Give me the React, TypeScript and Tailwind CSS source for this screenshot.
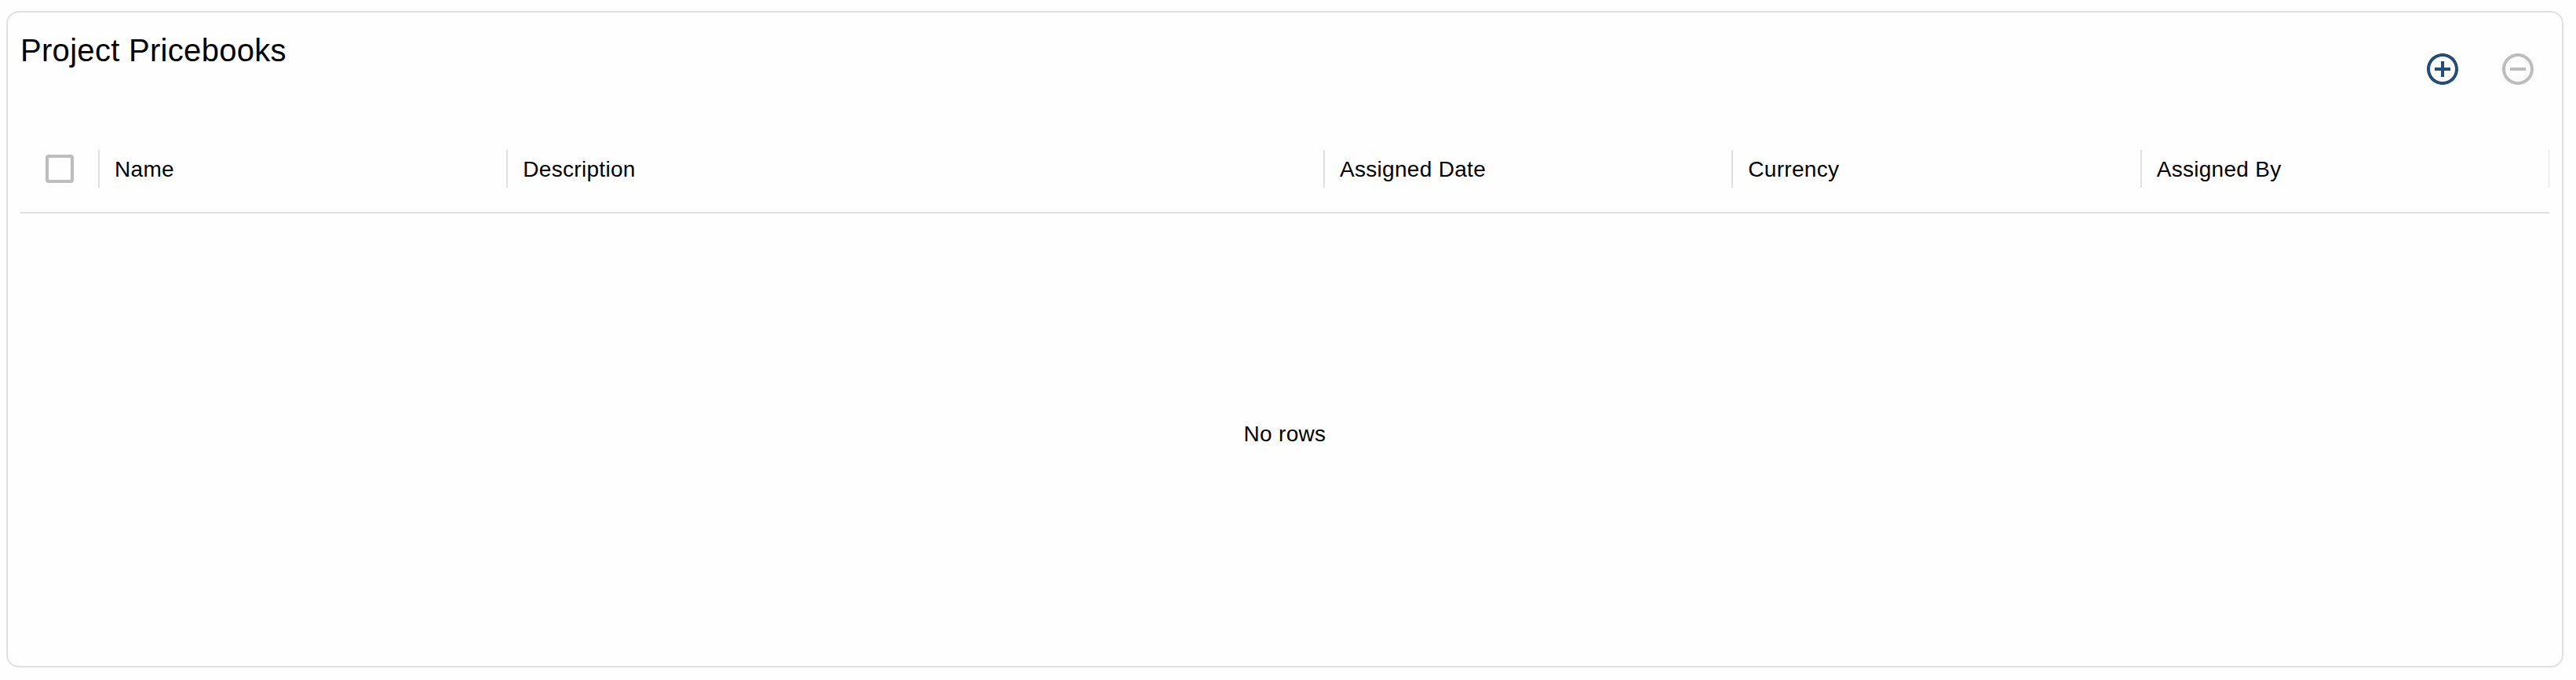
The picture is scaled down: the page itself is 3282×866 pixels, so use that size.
type Column = { label: string; width: string };

const columns: Column[] = [
  { label: 'Name', width: 'flex-[1_1_0%]' },
  { label: 'Description', width: 'flex-[2_1_0%]' },
  { label: 'Assigned Date', width: 'flex-[1_1_0%]' },
  { label: 'Currency', width: 'flex-[1_1_0%]' },
  { label: 'Assigned By', width: 'flex-[1_1_0%]' },
];

function Separator() {
  return <span className="-mr-px h-12 w-0.5 shrink-0 bg-[#e0e0e0]" />;
}

function CircleIcon({ plus = false }: { plus?: boolean }) {
  return (
    <svg viewBox="0 0 24 24" className="size-12" fill="currentColor" aria-hidden="true">
      {plus ? (
        <path d="M13 7h-2v4H7v2h4v4h2v-4h4v-2h-4V7zm-1-5C6.48 2 2 6.48 2 12s4.48 10 10 10 10-4.48 10-10S17.52 2 12 2zm0 18c-4.41 0-8-3.59-8-8s3.59-8 8-8 8 3.59 8 8-3.59 8-8 8z" />
      ) : (
        <path d="M7 11v2h10v-2H7zm5-9C6.48 2 2 6.48 2 12s4.48 10 10 10 10-4.48 10-10S17.52 2 12 2zm0 18c-4.41 0-8-3.59-8-8s3.59-8 8-8 8 3.59 8 8-3.59 8-8 8z" />
      )}
    </svg>
  );
}

export default function App() {
  return (
    <main className="flex h-[866px] w-full bg-[#fefefe] pt-3.5 pr-4 pb-4 pl-2 font-['Liberation_Sans',Arial,sans-serif] text-black">
      <section className="flex flex-1 flex-col rounded-2xl border-2 border-[#e0e0e0] px-4 pb-4">
        <header className="flex h-36 shrink-0 justify-between">
          <h2 className="pt-4 text-[40px] leading-[65px] tracking-[0.0075em]">Project Pricebooks</h2>
          <div className="flex items-start pt-6">
            <button type="button" aria-label="Add" className="p-6 text-[#234d76]">
              <CircleIcon plus />
            </button>
            <button type="button" aria-label="Remove" disabled className="-mr-6 p-6 pr-10 text-[#bdbdbd]">
              <CircleIcon />
            </button>
          </div>
        </header>
        <div className="flex flex-1 flex-col text-[28px] tracking-[0.01071em]">
          <div className="flex h-28 items-center overflow-hidden border-b-2 border-[#e0e0e0]">
            <div className="flex w-[100px] shrink-0 items-center justify-between">
              <span role="checkbox" aria-checked="false" aria-label="Select all" className="ml-8 size-9 rounded-[4px] border-4 border-[#bdbdbd]" />
              <Separator />
            </div>
            {columns.map((c) => (
              <div key={c.label} className={`flex min-w-0 items-center justify-between ${c.width}`}>
                <span className="pt-0.5 pl-5 whitespace-nowrap">{c.label}</span>
                <Separator />
              </div>
            ))}
          </div>
          <div className="flex flex-1 items-center justify-center pt-0.5">No rows</div>
        </div>
      </section>
    </main>
  );
}
